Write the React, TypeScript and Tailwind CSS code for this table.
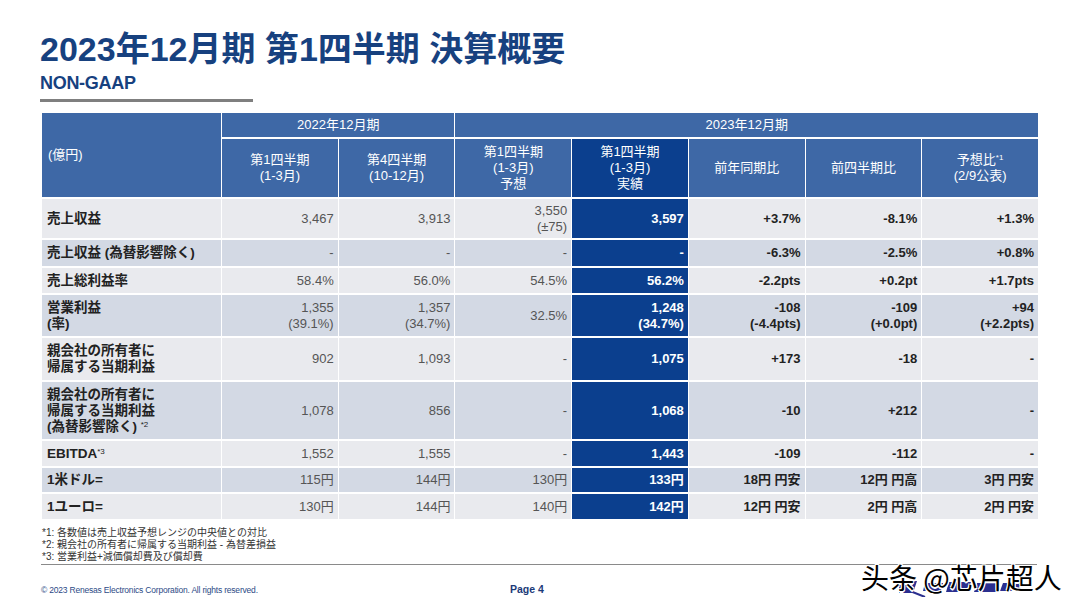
import React from "react";

const font = { fontFamily: '"Liberation Sans", "Noto Sans CJK JP", sans-serif' };

type Row = {
  label: React.ReactNode;
  h: string;
  shade: "light" | "dark";
  v: React.ReactNode[];
};

const rows: Row[] = [
  { label: "売上収益", h: "h-[39px]", shade: "light", v: ["3,467", "3,913", <>3,550<br />(±75)</>, "3,597", "+3.7%", "-8.1%", "+1.3%"] },
  { label: "売上収益 (為替影響除く)", h: "h-[26px]", shade: "dark", v: ["-", "-", "-", "-", "-6.3%", "-2.5%", "+0.8%"] },
  { label: "売上総利益率", h: "h-[25px]", shade: "light", v: ["58.4%", "56.0%", "54.5%", "56.2%", "-2.2pts", "+0.2pt", "+1.7pts"] },
  {
    label: <>営業利益<br />(率)</>,
    h: "h-[41px]",
    shade: "dark",
    v: [<>1,355<br />(39.1%)</>, <>1,357<br />(34.7%)</>, "32.5%", <>1,248<br />(34.7%)</>, <>-108<br />(-4.4pts)</>, <>-109<br />(+0.0pt)</>, <>+94<br />(+2.2pts)</>],
  },
  { label: <>親会社の所有者に<br />帰属する当期利益</>, h: "h-[42px]", shade: "light", v: ["902", "1,093", "-", "1,075", "+173", "-18", "-"] },
  {
    label: <>親会社の所有者に<br />帰属する当期利益<br />(為替影響除く) <sup className="text-[8px] font-normal">*2</sup></>,
    h: "h-[57px]",
    shade: "dark",
    v: ["1,078", "856", "-", "1,068", "-10", "+212", "-"],
  },
  { label: <>EBITDA<sup className="text-[8px] font-normal">*3</sup></>, h: "h-[25px]", shade: "light", v: ["1,552", "1,555", "-", "1,443", "-109", "-112", "-"] },
  { label: "1米ドル=", h: "h-[24px]", shade: "dark", v: ["115円", "144円", "130円", "133円", "18円 円安", "12円 円高", "3円 円安"] },
  { label: "1ユーロ=", h: "h-[25px]", shade: "light", v: ["130円", "144円", "140円", "142円", "12円 円安", "2円 円高", "2円 円安"] },
];

const Head = ({ children, dark }: { children: React.ReactNode; dark?: boolean }) => (
  <div className={`flex h-[58px] items-center justify-center text-center text-[13px] leading-[16px] text-white ${dark ? "bg-[#0b3f8e]" : "bg-[#3e68a6]"}`}>
    <div>{children}</div>
  </div>
);

export default function App() {
  return (
    <div className="relative h-[607px] w-[1080px] overflow-hidden bg-white" style={font}>
      <div className="pl-[40px] pt-[29px]">
        <h1 className="text-[34px] font-bold leading-[40px] text-[#17417f]">
          2023年12月期 第1四半期 決算概要
        </h1>
        <div className="mt-[3px] text-[18px] font-bold leading-[22px] tracking-[-0.3px] text-[#17417f]">NON-GAAP</div>
        <div className="mt-[5px] h-[3px] w-[213px] bg-[#7f7f7f]" />
      </div>

      <div className="ml-[42px] mt-[11px] grid w-[996px] grid-cols-[179px_repeat(7,1fr)] gap-x-px gap-y-[2px]">
        {/* header */}
        <div className="row-span-2 flex items-center bg-[#3e68a6] pl-[6px] text-[13px] text-white">(億円)</div>
        <div className="col-span-2 flex h-[24px] items-center justify-center bg-[#3e68a6] text-[13px] text-white">2022年12月期</div>
        <div className="col-span-5 flex h-[24px] items-center justify-center bg-[#3e68a6] text-[13px] text-white">2023年12月期</div>
        <Head>第1四半期<br />(1-3月)</Head>
        <Head>第4四半期<br />(10-12月)</Head>
        <Head>第1四半期<br />(1-3月)<br />予想</Head>
        <Head dark>第1四半期<br />(1-3月)<br />実績</Head>
        <Head>前年同期比</Head>
        <Head>前四半期比</Head>
        <Head>予想比<sup className="text-[8px]">*1</sup><br />(2/9公表)</Head>

        {/* body */}
        {rows.map((r, i) => {
          const bg = r.shade === "light" ? "bg-[#e9eaee]" : "bg-[#d3d9e4]";
          return (
            <React.Fragment key={i}>
              <div className={`flex ${r.h} items-center ${bg} pl-[5px] text-[13.5px] font-bold leading-[16px] text-[#222]`}>
                <div>{r.label}</div>
              </div>
              {r.v.map((val, j) => {
                let cls = "font-normal text-[#555]";
                let cbg = bg;
                if (j === 3) {
                  cls = "font-bold text-white";
                  cbg = "bg-[#0b3f8e]";
                } else if (j > 3) {
                  cls = "font-bold text-[#222]";
                }
                return (
                  <div key={j} className={`flex ${r.h} items-center justify-end ${cbg} pr-[4px] text-right text-[13px] leading-[16px] ${cls}`}>
                    <div>{val}</div>
                  </div>
                );
              })}
            </React.Fragment>
          );
        })}
      </div>

      <div className="ml-[42px] mt-[8px] text-[10px] leading-[12px] text-[#333]">
        <div>*1: 各数値は売上収益予想レンジの中央値との対比</div>
        <div>*2: 親会社の所有者に帰属する当期利益 - 為替差損益</div>
        <div>*3: 営業利益+減価償却費及び償却費</div>
      </div>
      <div className="ml-[41px] mt-[1px] h-px w-[996px] bg-[#8a8a8a]" />

      <div className="ml-[41px] mt-[17px] flex items-center">
        <div className="w-[469px] text-[8.5px] tracking-[-0.2px] text-[#2c4a86]">© 2023 Renesas Electronics Corporation. All rights reserved.</div>
        <div className="text-[10.5px] font-bold text-[#1c3a78]">Page 4</div>
      </div>

      {/* logo partly hidden under the watermark */}
      <svg className="absolute left-[895px] top-[577px]" width="130" height="20" viewBox="0 0 130 20">
        <path d="M4 4 L22 4 L18 16 L4 16 Z" fill="#2b2f8f" />
        <path d="M10 12 L30 20" stroke="#2b2f8f" strokeWidth="2" />
        <path d="M30 6 L48 6 L46 14 L28 14 Z" fill="#2b2f8f" />
        <path d="M54 5 L76 5 L73 15 L51 15 Z" fill="#2b2f8f" />
        <path d="M82 6 L104 6 L101 15 L79 15 Z" fill="#2b2f8f" />
        <path d="M108 6 L126 6 L123 14 L105 14 Z" fill="#2b2f8f" />
      </svg>
      <div
        className="absolute left-[861px] top-[559px] text-[28px] leading-[36px] text-black"
        style={{ fontFamily: '"Noto Sans CJK SC", sans-serif', textShadow: "1px 1px 0 #fff, -1px -1px 0 #fff, 1px -1px 0 #fff, -1px 1px 0 #fff, 0 2px 0 #fff" }}
      >
        头条 @芯片超人
      </div>
    </div>
  );
}
